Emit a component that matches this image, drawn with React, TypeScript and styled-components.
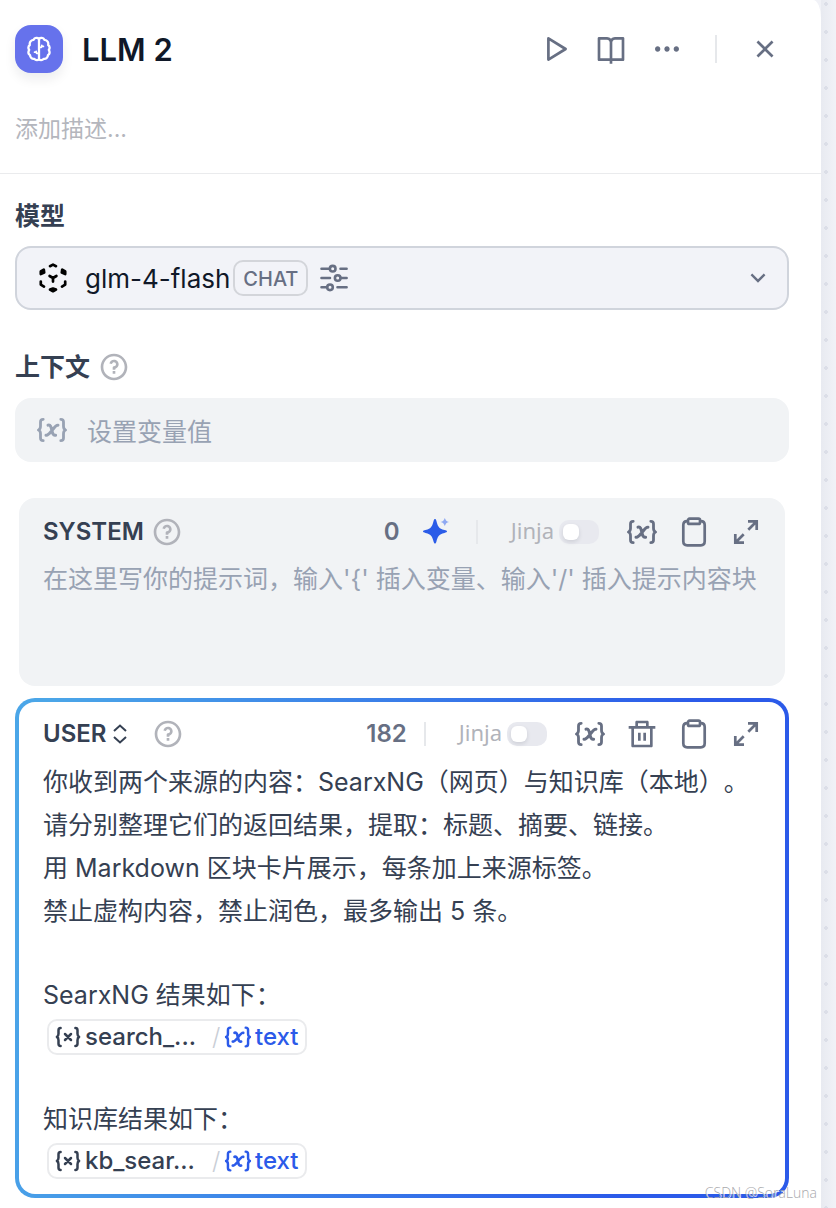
import React from 'react';
import styled, { createGlobalStyle } from 'styled-components';
import {
  RiBookOpenLine,
  RiMoreFill,
  RiCloseLine,
  RiQuestionLine,
  RiDeleteBinLine,
  RiArrowDownSLine,
} from 'react-icons/ri';

const GlobalStyle = createGlobalStyle`
  *, *::before, *::after { box-sizing: border-box; }
  body {
    margin: 0;
    font-family: Inter, "Noto Sans CJK SC", sans-serif;
    color: #354052;
    background: #f0f2f6;
    text-spacing-trim: space-all;
  }
  button, textarea, input { font: inherit; color: inherit; }
  h1, h2, h3, p { margin: 0; }
`;

/* ---------- icons ---------- */

type IconProps = { size?: number };

const Svg = styled.svg`
  display: block;
  flex: none;
  fill: none;
  stroke: currentColor;
`;

const BrainIcon = () => (
  <Svg width="28" height="28" viewBox="0 0 28 28" strokeWidth="2.3" strokeLinecap="round" strokeLinejoin="round">
    <path d="M14 4C12.6 2.4 9.6 2.6 8.6 4.8 5.6 5 4.2 7.6 4.8 10 3 11.4 3 13.6 4.2 14.8 3 16.8 3.4 19 5 20.2 5.2 22.8 7.2 24.2 9.2 23.8 10.8 25.6 13 25.4 14 24.2" />
    <path d="M14 4C15.4 2.4 18.4 2.6 19.4 4.8 22.4 5 23.8 7.6 23.2 10 25 11.4 25 13.6 23.8 14.8 25 16.8 24.6 19 23 20.2 22.8 22.8 20.8 24.2 18.8 23.8 17.2 25.6 15 25.4 14 24.2" />
    <path d="M14 4V24.2" />
    <path strokeWidth="1.8" d="M14 12.4H15.4C16.4 12.4 16.8 11.8 16.8 10.4M16.6 11.4H18.4M14 18.4H12.6C11.600 18.4 11.2 17.8 11.2 16.4M11.4 17.2H9.6" />
  </Svg>
);

const PlayIcon = () => (
  <Svg width="32" height="32" viewBox="0 0 32 32" strokeWidth="2.7" strokeLinejoin="round">
    <path d="M9.4 5.4L26.6 16 9.4 26.6Z" />
  </Svg>
);

const CubeIcon = () => (
  <Svg width="32" height="32" viewBox="0 0 32 32" strokeWidth="2.7" strokeLinecap="round" strokeLinejoin="round">
    <path d="M13 4.2L16 2.6 19 4.2" />
    <path fill="currentColor" d="M3.8 12V9.4L6.8 7.6 7.2 10.6ZM28.2 12V9.4L25.2 7.6 24.8 10.6Z" />
    <path d="M3.8 19.5V22.6L7 24.6M28.2 19.5V22.6L25 24.6M12.6 14L16 16 19.4 14M16 16V19.6" />
    <path fill="currentColor" d="M13 27.6L16 29.2 19 27.6 16 26.6Z" />
  </Svg>
);

const SlidersIcon = () => (
  <Svg width="32" height="32" viewBox="0 0 32 32" strokeWidth="2.6" strokeLinecap="round">
    <path d="M3.5 6.7H11.5M22.5 6.7H28.6M3.5 16H12M23 16H28.6M3.5 25.3H9M19.5 25.3H28.6" />
    <circle cx="14.7" cy="6.7" r="2.8" />
    <circle cx="19.7" cy="16" r="2.8" />
    <circle cx="12" cy="25.3" r="2.8" />
  </Svg>
);

const VariableIcon = ({ size = 32 }: IconProps) => (
  <Svg width={size} height={size} viewBox="0 0 32 32" strokeWidth="2.8" strokeLinecap="round" strokeLinejoin="round">
    <path d="M7.2 5.3C5.3 5.3 4.5 6.1 4.5 8V12.3C4.5 14.5 3.9 15.5 2.4 16 3.9 16.5 4.5 17.5 4.5 19.7V24C4.5 25.9 5.3 26.7 7.2 26.7" />
    <path d="M24.8 5.3C26.7 5.3 27.5 6.1 27.5 8V12.3C27.5 14.5 28.1 15.5 29.6 16 28.1 16.5 27.5 17.5 27.5 19.7V24C27.5 25.9 26.7 26.7 24.8 26.7" />
    <path strokeWidth="3" d="M12 11.2C17 9.4 14.6 22.8 19.6 21.2M22 11.2C18.5 10.2 13.9 22.3 10 21.2" />
  </Svg>
);

const EnvIcon = () => (
  <Svg width="26" height="26" viewBox="0 0 26 26" strokeWidth="2.5" strokeLinecap="round" strokeLinejoin="round">
    <path d="M5.6 4C4 4 3.5 4.7 3.5 6.2V9.8C3.5 11.6 3 12.5 1.9 13 3 13.5 3.5 14.4 3.5 16.2V19.8C3.5 21.3 4 22 5.6 22" />
    <path d="M20.4 4C22 4 22.5 4.7 22.5 6.2V9.8C22.5 11.6 23 12.5 24.1 13 23 13.5 22.5 14.4 22.5 16.2V19.8C22.5 21.3 22 22 20.4 22" />
    <path d="M10 10L16 16M16 10L10 16" />
  </Svg>
);

const ClipboardIcon = () => (
  <Svg width="32" height="32" viewBox="0 0 32 32" strokeWidth="2.7" strokeLinejoin="round">
    <path d="M10 5.2H9.2C6.5 5.2 5.3 6.5 5.3 9.2V25.3C5.3 28 6.5 29.3 9.2 29.3H22.8C25.5 29.3 26.7 28 26.7 25.3V9.2C26.7 6.5 25.5 5.2 22.8 5.2H22" />
    <rect x="10" y="2.7" width="12" height="5.2" rx="1.5" />
  </Svg>
);

const ExpandIcon = () => (
  <Svg width="32" height="32" viewBox="0 0 32 32" strokeWidth="2.7">
    <path d="M18 5.3H26.7V14M26.7 5.3L18.3 13.7M14 26.7H5.3V18M5.3 26.7L13.7 18.3" />
  </Svg>
);

const SparkleIcon = () => (
  <Svg width="28" height="28" viewBox="0 1 28 28">
    <path
      fill="#2b5ce8"
      stroke="none"
      d="M13 2C13.7 2 14 2.6 14.3 3.5 15.8 9.3 16.5 11.5 22.5 13.1 24 13.5 25 13.8 25 14.5 25 15.2 24 15.5 22.5 15.9 16.5 17.5 15.8 19.2 14.3 25 14 25.9 13.7 26.5 13 26.5 12.3 26.5 12 25.9 11.7 25 10.2 19.2 9.5 17.5 3.5 15.9 2 15.5 1 15.2 1 14.5 1 13.8 2 13.5 3.5 13.1 9.5 11.5 10.2 9.3 11.7 3.5 12 2.6 12.3 2 13 2Z"
    />
    <path fill="#8fa9f2" stroke="none" d="M22.8 1C23.8 3.6 24.4 4.2 27 5 24.4 5.8 23.8 6.4 22.8 9 21.8 6.4 21.2 5.8 18.6 5 21.2 4.2 21.8 3.6 22.8 1Z" />
  </Svg>
);

const UpDownIcon = () => (
  <Svg width="16" height="24" viewBox="0 0 16 24" strokeWidth="2">
    <path d="M2 9L8 3.5 14 9M2 15L8 20.5 14 15" />
  </Svg>
);

/* ---------- layout ---------- */

const Canvas = styled.div`
  min-height: 100vh;
  padding-right: 15px;
  background:
    linear-gradient(270deg, transparent 0, rgba(200, 206, 218, 0.22) 15px, transparent 15px),
    radial-gradient(circle, #dfe1ea 2px, transparent 2px) right -4px top -10px / 28px 28px,
    #f1f2f7;
`;

const Panel = styled.main`
  position: relative;
  min-height: 100vh;
  background: #fff;
  border-top-right-radius: 8px 18px;
`;

const Header = styled.header`
  padding: 25px 40px 28px 15px;
  border-bottom: 1px solid #eaebed;
`;

const TitleRow = styled.div`
  display: flex;
  align-items: center;
`;

const NodeBadge = styled.span`
  display: grid;
  place-items: center;
  width: 48px;
  height: 48px;
  border-radius: 16px;
  background: #6672ec;
  color: #fff;
  box-shadow: 0 6px 12px rgba(16, 24, 40, 0.08);
`;

const Title = styled.h1`
  flex: 1;
  margin-left: 19px;
  padding-top: 2px;
  font-size: 31px;
  line-height: 40px;
  font-weight: 600;
  color: #101828;
`;

const Actions = styled.div`
  display: flex;
  align-items: center;
  gap: 24px;
`;

const IconButton = styled.button`
  display: grid;
  place-items: center;
  flex: none;
  width: 32px;
  height: 32px;
  padding: 0;
  border: 0;
  background: none;
  color: #676f83;
  cursor: pointer;
`;

const Separator = styled.span<{ $height: number; $space: number }>`
  width: 2px;
  height: ${(p) => p.$height}px;
  margin: 0 ${(p) => p.$space}px;
  background: #e6e8eb;
`;

const Description = styled.input`
  display: block;
  width: 100%;
  height: 32px;
  margin-top: 40px;
  padding: 0;
  border: 0;
  outline: 0;
  background: none;
  font-size: 23px;
  &::placeholder { color: #b4b6bd; opacity: 1; }
`;

const Body = styled.div`
  padding: 24px 32px 10px 15px;
`;

const SectionTitle = styled.h2`
  display: flex;
  align-items: center;
  gap: 8px;
  height: 36px;
  font-size: 25px;
  line-height: 36px;
  font-weight: 600;
`;

const Help = styled.span`
  display: inline-flex;
  color: #b1b3ba;
`;

const ModelSelect = styled.button`
  display: flex;
  align-items: center;
  width: 100%;
  height: 64px;
  margin: 12px 0 39px;
  padding: 0 15px 0 20px;
  border: 2px solid #d0d4dc;
  border-radius: 16px;
  background: #f2f3f8;
  color: #000;
  text-align: left;
  cursor: pointer;
`;

const ModelName = styled.span`
  margin-left: 16px;
  padding-top: 2px;
  font-size: 26px;
  line-height: 36px;
  color: #101828;
`;

const ModeTag = styled.span`
  height: 36px;
  margin: 0 10px 0 3px;
  padding: 0 8px;
  border: 2px solid #d3d5da;
  border-radius: 10px;
  font-size: 20px;
  line-height: 34px;
  font-weight: 500;
  color: #676f83;
`;

const Muted = styled.span<{ $push?: boolean }>`
  display: inline-flex;
  margin-left: ${(p) => (p.$push ? 'auto' : '0')};
  color: #676f83;
`;

const ContextField = styled.button`
  display: flex;
  align-items: center;
  gap: 19px;
  width: 100%;
  height: 64px;
  margin: 13px 0 32px;
  padding: 0 21px;
  border: 0;
  border-radius: 16px;
  background: #f1f3f5;
  color: #98a2b3;
  font-size: 25px;
  text-align: left;
  cursor: pointer;
`;

const PromptCard = styled.section<{ $focused?: boolean }>`
  border: 4px solid transparent;
  border-radius: 20px;
  padding: ${(p) => (p.$focused ? '8px 23px 13px 24px' : '10px 23px 0 24px')};
  background: ${(p) =>
    p.$focused
      ? 'linear-gradient(#fff, #fff) padding-box, linear-gradient(100deg, #4ba6e8 4%, #2b5ae9 80%) border-box'
      : '#f1f3f5 padding-box'};
  & + & { margin-top: 8px; }
`;

const CardHeader = styled.div`
  display: flex;
  align-items: center;
  height: 48px;
  margin-bottom: 3px;
`;

const Role = styled.h3<{ $gap: number }>`
  display: flex;
  align-items: center;
  flex: 1;
  gap: ${(p) => p.$gap}px;
  font-size: 24px;
  line-height: 32px;
  font-weight: 600;
`;

const RoleButton = styled.button`
  display: flex;
  align-items: center;
  gap: 6px;
  padding: 0;
  border: 0;
  background: none;
  cursor: pointer;
`;

const Count = styled.span`
  font-size: 24px;
  line-height: 32px;
  font-weight: 600;
  color: #676f83;
`;

const Generate = styled(IconButton)`
  margin-left: 20px;
  margin-right: 7px;
`;

const JinjaLabel = styled.label`
  display: flex;
  align-items: center;
  gap: 5px;
  margin: 0 27px 0 16px;
  color: #b1b3ba;
`;

const JinjaText = styled.span`
  padding-bottom: 4px;
  font-family: "Noto Sans", sans-serif;
  font-size: 22px;
  line-height: 28px;
`;

const Switch = styled.input`
  appearance: none;
  display: flex;
  align-items: center;
  width: 40px;
  height: 24px;
  margin: 0;
  padding: 0 4px;
  border-radius: 10px;
  background: #e8e9ef;
  &::before {
    content: "";
    width: 16px;
    height: 16px;
    border-radius: 6px;
    background: #fff;
    box-shadow: 0 2px 4px rgba(16, 24, 40, 0.12);
  }
`;

const Tools = styled.div`
  display: flex;
  gap: 20px;
`;

const PromptInput = styled.textarea`
  display: block;
  width: 100%;
  height: 127px;
  padding: 0;
  border: 0;
  outline: 0;
  resize: none;
  overflow: hidden;
  background: none;
  font-size: 25px;
  line-height: 40px;
  &::placeholder { color: #98a2b3; opacity: 1; }
`;

const Editor = styled.div`
  font-size: 25px;
  outline: 0;
`;

const Line = styled.p<{ $height: number }>`
  display: flex;
  align-items: center;
  min-height: ${(p) => p.$height}px;
  line-height: ${(p) => p.$height}px;
  white-space: pre;
`;

const VariableTag = styled.span`
  display: inline-flex;
  align-items: center;
  height: 36px;
  margin-left: 4px;
  padding: 0 7px 0 6px;
  border: 2px solid #eaebed;
  border-radius: 10px;
  background: #fff;
  font-size: 24px;
  line-height: 32px;
  font-weight: 500;
`;

const NodeName = styled.span`
  width: 127px;
  margin-left: 4px;
`;

const Slash = styled.span`
  width: 12px;
  color: #c9ced6;
  font-weight: 300;
`;

const VariableName = styled.span`
  display: inline-flex;
  align-items: center;
  gap: 3px;
  color: #2b5ae9;
`;

const Watermark = styled.span`
  position: absolute;
  right: 4px;
  bottom: 6px;
  font-family: "Open Sans", sans-serif;
  font-size: 14px;
  line-height: 18px;
  font-weight: 300;
  color: #a9a9ad;
  text-shadow: 1px 1px 0 #fff;
`;

/* ---------- parts ---------- */

const HelpMark = () => (
  <Help>
    <RiQuestionLine size={32} />
  </Help>
);

const Jinja = ({ id }: { id: string }) => (
  <JinjaLabel htmlFor={id}>
    <JinjaText>Jinja</JinjaText>
    <Switch id={id} type="checkbox" role="switch" />
  </JinjaLabel>
);

const CardTools = ({ removable }: { removable?: boolean }) => (
  <Tools>
    <IconButton aria-label="插入变量"><VariableIcon /></IconButton>
    {removable && <IconButton aria-label="删除"><RiDeleteBinLine size={32} /></IconButton>}
    <IconButton aria-label="复制"><ClipboardIcon /></IconButton>
    <IconButton aria-label="展开"><ExpandIcon /></IconButton>
  </Tools>
);

const VariableRef = ({ node, name }: { node: string; name: string }) => (
  <VariableTag>
    <EnvIcon />
    <NodeName>{node}</NodeName>
    <Slash>/</Slash>
    <VariableName>
      <VariableIcon size={28} />
      {name}
    </VariableName>
  </VariableTag>
);

const instructions = [
  '你收到两个来源的内容：SearxNG（网页）与知识库（本地）。',
  '请分别整理它们的返回结果，提取：标题、摘要、链接。',
  '用 Markdown 区块卡片展示，每条加上来源标签。',
  '禁止虚构内容，禁止润色，最多输出 5 条。',
];

const results = [
  { heading: 'SearxNG 结果如下：', node: 'search_...', name: 'text' },
  { heading: '知识库结果如下：', node: 'kb_sear...', name: 'text' },
];

export default function App() {
  return (
    <Canvas>
      <GlobalStyle />
      <Panel>
        <Header>
          <TitleRow>
            <NodeBadge><BrainIcon /></NodeBadge>
            <Title>LLM 2</Title>
            <Actions>
              <IconButton aria-label="运行"><PlayIcon /></IconButton>
              <IconButton aria-label="文档"><RiBookOpenLine size={32} /></IconButton>
              <IconButton aria-label="更多"><RiMoreFill size={32} /></IconButton>
              <Separator $height={28} $space={8} />
              <IconButton aria-label="关闭"><RiCloseLine size={32} /></IconButton>
            </Actions>
          </TitleRow>
          <Description aria-label="描述" placeholder="添加描述..." />
        </Header>

        <Body>
          <SectionTitle>模型</SectionTitle>
          <ModelSelect aria-haspopup="listbox">
            <CubeIcon />
            <ModelName>glm-4-flash</ModelName>
            <ModeTag>CHAT</ModeTag>
            <Muted><SlidersIcon /></Muted>
            <Muted $push><RiArrowDownSLine size={28} /></Muted>
          </ModelSelect>

          <SectionTitle>上下文<HelpMark /></SectionTitle>
          <ContextField>
            <VariableIcon />
            设置变量值
          </ContextField>

          <PromptCard>
            <CardHeader>
              <Role $gap={7}>SYSTEM<HelpMark /></Role>
              <Count>0</Count>
              <Generate aria-label="生成"><SparkleIcon /></Generate>
              <Separator $height={24} $space={17} />
              <Jinja id="jinja-system" />
              <CardTools />
            </CardHeader>
            <PromptInput
              aria-label="SYSTEM"
              placeholder="在这里写你的提示词，输入'{' 插入变量、输入'/' 插入提示内容块"
            />
          </PromptCard>

          <PromptCard $focused>
            <CardHeader>
              <Role $gap={24}>
                <RoleButton>USER<UpDownIcon /></RoleButton>
                <HelpMark />
              </Role>
              <Count>182</Count>
              <Separator $height={24} $space={17} />
              <Jinja id="jinja-user" />
              <CardTools removable />
            </CardHeader>
            <Editor role="textbox" aria-label="USER" aria-multiline="true">
              {instructions.map((text) => (
                <Line key={text} $height={43}>{text}</Line>
              ))}
              {results.map((r) => (
                <React.Fragment key={r.heading}>
                  <Line $height={41} />
                  <Line $height={42}>{r.heading}</Line>
                  <Line $height={41}><VariableRef node={r.node} name={r.name} /></Line>
                </React.Fragment>
              ))}
            </Editor>
          </PromptCard>
        </Body>
        <Watermark>CSDN @SoraLuna</Watermark>
      </Panel>
    </Canvas>
  );
}
